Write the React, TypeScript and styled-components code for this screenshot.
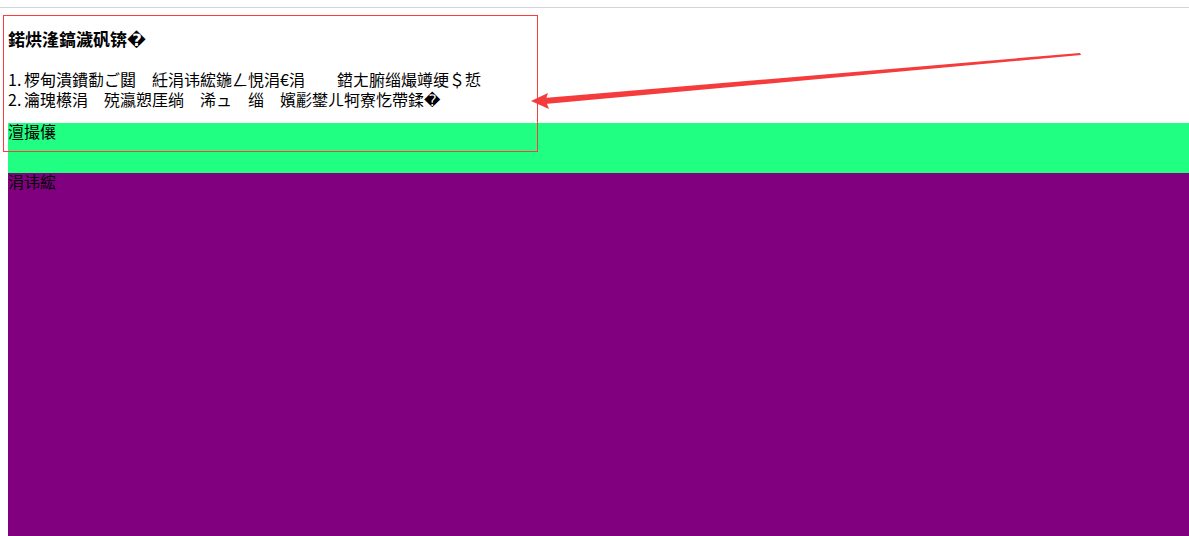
import styled, { createGlobalStyle } from "styled-components";

const GlobalStyle = createGlobalStyle`
  html, body {
    margin: 0;
    padding: 0;
    background: #ffffff;
  }
  body {
    font-family: "Noto Sans CJK SC", "DejaVu Sans", sans-serif;
    color: #000000;
  }
`;

const notes = [
  { num: "1.", text: "椤甸潰鐨勫ご閮　紝涓讳綋鍦ㄥ悓涓€涓　　鍣ㄤ腑缁熶竴绠＄悊" },
  { num: "2.", text: "瀹瑰櫒涓　殑瀛愬厓绱　浠ュ　缁　嬪彲鐢ㄦ牱寮忔帶鍒�" },
];

export default function App() {
  return (
    <>
      <GlobalStyle />
      <TopRule />
      <Page>
        <Intro>
          <Title>鍩烘湰鎬濊矾锛�</Title>
          <NoteList>
            {notes.map((n) => (
              <Note key={n.num}>
                <Num>{n.num}</Num>
                {n.text}
              </Note>
            ))}
          </NoteList>
        </Intro>

        {/* 头部 */}
        <Band $color="#21ff82" $height="50px">澶撮儴</Band>
        {/* 主体 */}
        <Band $color="#800080" $height="420px">涓讳綋</Band>
      </Page>

      {/* annotation drawn over the page */}
      <Annotation />
      <Arrow width="1189" height="536" viewBox="0 0 1189 536">
        <polygon points="1080,53 1081,55 545,104 544,98" fill="#f53b3b" />
        <polygon points="531,101 548,93 546,99 547,104 549,109" fill="#f53b3b" />
      </Arrow>
    </>
  );
}

const TopRule = styled.div`
  height: 7px;
  border-bottom: 1px solid #d3d3db;
`;

const Page = styled.div`
  padding-left: 8px;
`;

const Intro = styled.div`
  padding-top: 20px;
  padding-bottom: 14px;
`;

const Title = styled.div`
  font-size: 17px;
  line-height: 22px;
  font-weight: 700;
  margin-bottom: 19px;
`;

const NoteList = styled.div`
  display: flex;
  flex-direction: column;
`;

const Note = styled.div`
  font-size: 16px;
  line-height: 20px;
  white-space: pre;
`;

const Num = styled.span`
  display: inline-block;
  width: 16px;
`;

const Band = styled.div<{ $color: string; $height: string }>`
  background: ${(p) => p.$color};
  height: ${(p) => p.$height};
  font-size: 16px;
  line-height: 16px;
`;

const Annotation = styled.div`
  position: absolute;
  left: 3px;
  top: 15px;
  width: 533px;
  height: 135px;
  border: 1px solid #ff3c3c;
  pointer-events: none;
  z-index: 2;
`;

const Arrow = styled.svg`
  position: absolute;
  left: 0;
  top: 0;
  pointer-events: none;
  z-index: 3;
`;
